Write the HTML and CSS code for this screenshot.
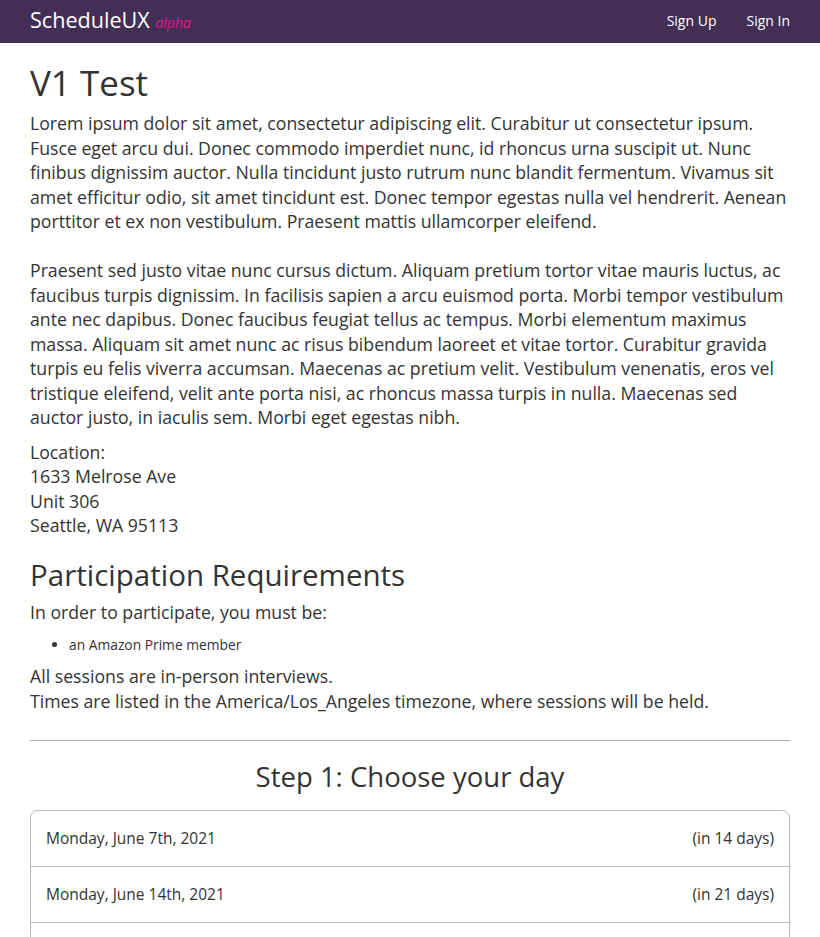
FILE: index.html
```html
<!DOCTYPE html>
<html>
<head>
<meta charset="utf-8">
<link rel="stylesheet" href="styles.css">
</head>
<body>
<nav class="navbar">
  <div class="brand">ScheduleUX <span class="alpha">alpha</span></div>
  <div class="nav-links">
    <a href="#">Sign Up</a>
    <a href="#">Sign In</a>
  </div>
</nav>
<main class="container">
  <h1 class="title">V1 Test</h1>
  <p class="desc">Lorem ipsum dolor sit amet, consectetur adipiscing elit. Curabitur ut consectetur ipsum. Fusce eget arcu dui. Donec commodo imperdiet nunc, id rhoncus urna suscipit ut. Nunc finibus dignissim auctor. Nulla tincidunt justo rutrum nunc blandit fermentum. Vivamus sit amet efficitur odio, sit amet tincidunt est. Donec tempor egestas nulla vel hendrerit. Aenean porttitor et ex non vestibulum. Praesent mattis ullamcorper eleifend.<br><br>Praesent sed justo vitae nunc cursus dictum. Aliquam pretium tortor vitae mauris luctus, ac faucibus turpis dignissim. In facilisis sapien a arcu euismod porta. Morbi tempor vestibulum ante nec dapibus. Donec faucibus feugiat tellus ac tempus. Morbi elementum maximus massa. Aliquam sit amet nunc ac risus bibendum laoreet et vitae tortor. Curabitur gravida turpis eu felis viverra accumsan. Maecenas ac pretium velit. Vestibulum venenatis, eros vel tristique eleifend, velit ante porta nisi, ac rhoncus massa turpis in nulla. Maecenas sed auctor justo, in iaculis sem. Morbi eget egestas nibh.</p>
  <p class="location">Location:<br>1633 Melrose Ave<br>Unit 306<br>Seattle, WA 95113</p>
  <h2 class="section-title">Participation Requirements</h2>
  <p class="intro">In order to participate, you must be:</p>
  <ul class="reqs">
    <li>an Amazon Prime member</li>
  </ul>
  <p class="notes">All sessions are in-person interviews.<br>Times are listed in the America/Los_Angeles timezone, where sessions will be held.</p>
  <hr class="divider">
  <h2 class="step-title">Step 1: Choose your day</h2>
  <div class="day-list">
    <a class="day-item" href="#"><span>Monday, June 7th, 2021</span><span>(in 14 days)</span></a>
    <a class="day-item" href="#"><span>Monday, June 14th, 2021</span><span>(in 21 days)</span></a>
    <a class="day-item" href="#"><span>Monday, June 21st, 2021</span><span>(in 28 days)</span></a>
  </div>
</main>
</body>
</html>
```
FILE: styles.css
```css
* { box-sizing: border-box; }
body {
  margin: 0;
  font-family: "Open Sans", "Noto Sans", sans-serif;
  color: #333;
  background: #fff;
  font-size: 17.7px;
  line-height: 24.5px;
}
.navbar {
  height: 43px;
  background: #432f56;
  display: flex;
  align-items: center;
  justify-content: space-between;
  padding: 0 30px;
}
.brand {
  color: #fff;
  font-size: 21.6px;
  line-height: 24px;
}
.alpha {
  color: #e0148c;
  font-style: italic;
  font-size: 14px;
}
.nav-links {
  display: flex;
  gap: 30px;
}
.nav-links a {
  color: #fff;
  text-decoration: none;
  font-size: 14px;
}
.container {
  padding: 0 30px;
}
.title {
  font-size: 35px;
  font-weight: 400;
  line-height: 42px;
  margin: 19px 0 0;
}
.desc { margin: 7px 0 0; }
.location { margin: 10px 0 0; }
.section-title {
  font-size: 29.5px;
  font-weight: 400;
  line-height: 36px;
  margin: 19px 0 0;
}
.intro { margin: 7px 0 0; }
.reqs {
  margin: 11px 0 0;
  padding-left: 39px;
  font-size: 13.8px;
  line-height: 20px;
}
.notes { margin: 9px 0 0; }
.divider {
  margin: 27px 0 0;
  border: 0;
  border-top: 1px solid #aaa;
}
.step-title {
  text-align: center;
  font-size: 27.5px;
  font-weight: 400;
  line-height: 36px;
  margin: 18px 0 0;
}
.day-list {
  margin-top: 15px;
  border: 1px solid #bbb;
  border-radius: 8px;
  display: flex;
  flex-direction: column;
}
.day-item {
  display: flex;
  justify-content: space-between;
  align-items: center;
  height: 56px;
  padding: 0 15px;
  color: #333;
  text-decoration: none;
  font-size: 15.5px;
  border-bottom: 1px solid #bbb;
}
.day-item:last-child { border-bottom: 0; }
```
